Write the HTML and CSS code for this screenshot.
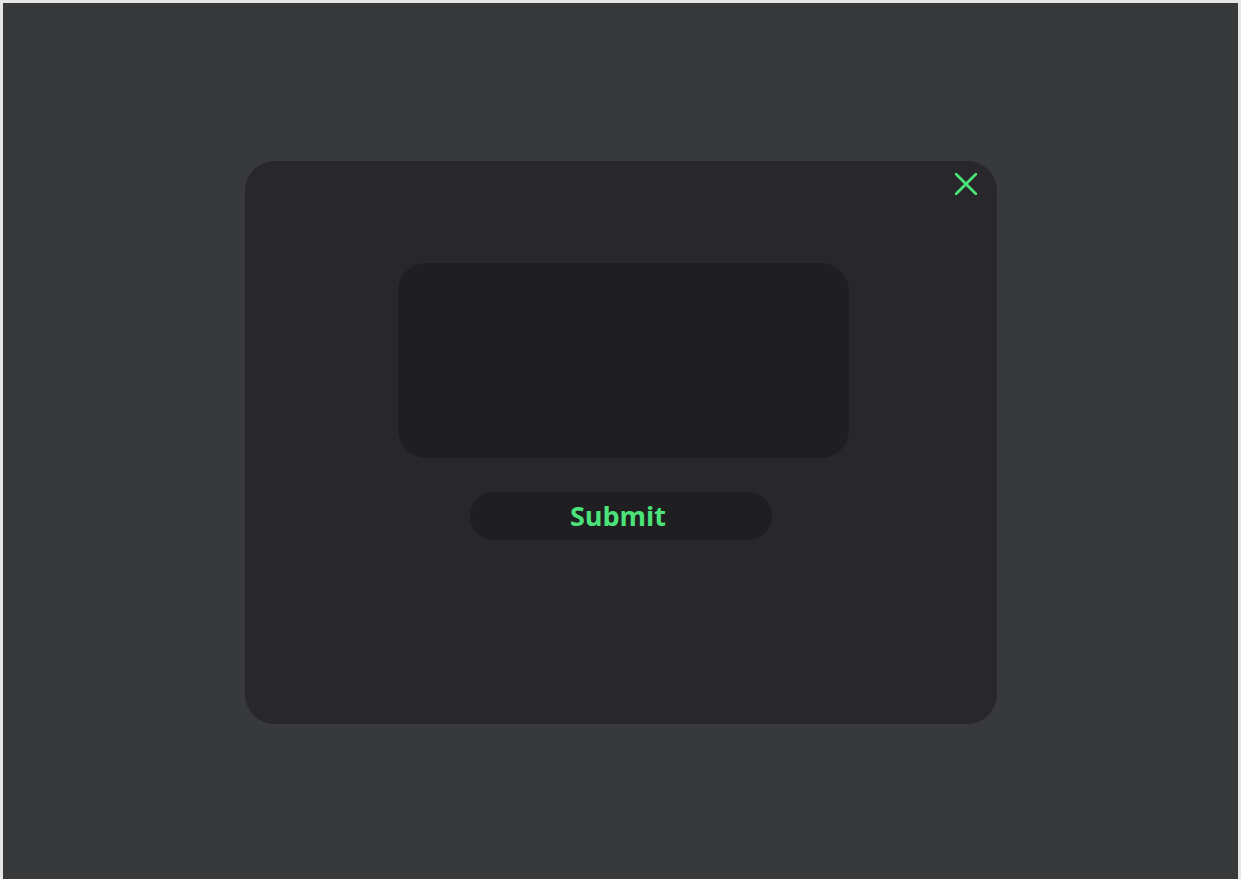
FILE: index.html
```html
<!DOCTYPE html>
<html lang="en">
<head>
    <meta charset="UTF-8">
    <meta name="viewport" content="width=device-width, initial-scale=1.0">
    <title>Submit</title>
    <link rel="stylesheet" href="styles.css">
</head>
<body>
    <div class="overlay">
      <div class="modal">
        <button class="close-button" aria-label="Close">
          <svg width="22" height="22" viewBox="0 0 22 22">
            <path d="M1 1 L21 21 M21 1 L1 21" stroke="#4be37a" stroke-width="2.8" stroke-linecap="square" fill="none"/>
          </svg>
        </button>
        <div class="modal-content">
          <div class="input-box"></div>
          <button class="submit-button">Submit</button>
        </div>
      </div>
    </div>
</body>
</html>
```

FILE: styles.css
```css
html {
    background-color: #e6e6e6;
}
body {
    margin: 3px 3px 0 3px;
    font-family: "Open Sans", sans-serif;
}
.overlay {
    height: 876px;
    background-color: #38393b;
    display: flex;
    justify-content: center;
    padding-top: 158px;
    box-sizing: border-box;
}
.modal {
    position: relative;
    width: 752px;
    height: 563px;
    background-color: #28282a;
    border-radius: 30px;
    margin-left: 1px;
}
.close-button {
    position: absolute;
    top: 12px;
    right: 20px;
    background: none;
    border: none;
    padding: 0;
    cursor: pointer;
}
.close-button svg {
    display: block;
}
.modal-content {
    display: flex;
    flex-direction: column;
    align-items: center;
    padding-top: 102px;
}
.input-box {
    width: 451px;
    height: 195px;
    background-color: #1f1f21;
    border-radius: 28px;
    margin-left: 5px;
}
.submit-button {
    margin-top: 34px;
    width: 302px;
    height: 48px;
    border: none;
    border-radius: 24px;
    background-color: #1f1f21;
    color: #4be37a;
    font-family: "Open Sans", sans-serif;
    font-weight: 700;
    font-size: 27px;
    line-height: 48px;
    padding: 0 0 4px 0;
    text-indent: -6px;
    cursor: pointer;
}
```
